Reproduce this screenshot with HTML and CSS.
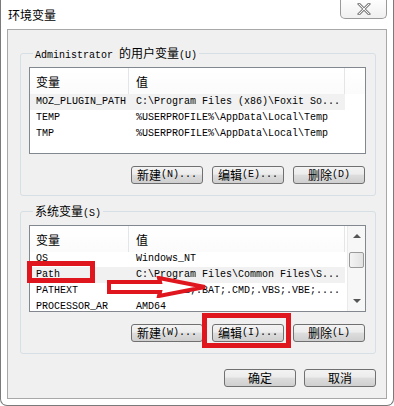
FILE: index.html
```html
<!DOCTYPE html>
<html lang="zh-CN">
<head>
  <meta charset="UTF-8" />
  <title>环境变量</title>
  <link rel="stylesheet" href="styles.css">
</head>
<body>
  <div class="window">
    <!-- barra de título -->
    <div class="titlebar">
      <span class="title">环境变量</span>
      <button class="close" aria-label="关闭">
        <svg viewBox="0 0 14 12" width="14" height="12">
          <path d="M2 1 L12 11 M12 1 L2 11" stroke="#8a8a8a" stroke-width="3" stroke-linecap="square"/>
          <path d="M2 1 L12 11 M12 1 L2 11" stroke="#f4f4f4" stroke-width="1"/>
        </svg>
      </button>
    </div>

    <div class="panel">
      <fieldset class="group">
        <legend><span class="mono">Administrator</span> <span class="cjk">的用户变量</span><span class="mono">(U)</span></legend>
        <div class="list">
          <div class="list-head">
            <span class="col-name">变量</span>
            <span class="col-value">值</span>
          </div>
          <div class="list-body">
            <div class="row sel"><span class="col-name">MOZ_PLUGIN_PATH</span><span class="col-value">C:\Program Files (x86)\Foxit So...</span></div>
            <div class="row"><span class="col-name">TEMP</span><span class="col-value">%USERPROFILE%\AppData\Local\Temp</span></div>
            <div class="row"><span class="col-name">TMP</span><span class="col-value">%USERPROFILE%\AppData\Local\Temp</span></div>
          </div>
        </div>
        <div class="btn-row">
          <button class="btn"><span class="cjk">新建</span>(N)...</button>
          <button class="btn"><span class="cjk">编辑</span>(E)...</button>
          <button class="btn"><span class="cjk">删除</span>(D)</button>
        </div>
      </fieldset>

      <fieldset class="group">
        <legend><span class="cjk">系统变量</span><span class="mono">(S)</span></legend>
        <div class="list scrolling">
          <div class="list-head">
            <span class="col-name">变量</span>
            <span class="col-value">值</span>
          </div>
          <div class="list-body">
            <div class="row"><span class="col-name">OS</span><span class="col-value">Windows_NT</span></div>
            <div class="row sel"><span class="col-name">Path</span><span class="col-value">C:\Program Files\Common Files\S...</span></div>
            <div class="row"><span class="col-name">PATHEXT</span><span class="col-value">.COM;.EXE;.BAT;.CMD;.VBS;.VBE;....</span></div>
            <div class="row"><span class="col-name">PROCESSOR_AR</span><span class="col-value">AMD64</span></div>
          </div>
          <div class="scrollbar">
            <span class="arrow up"></span>
            <span class="thumb"></span>
            <span class="arrow down"></span>
          </div>
        </div>
        <div class="btn-row">
          <button class="btn"><span class="cjk">新建</span>(W)...</button>
          <button class="btn"><span class="cjk">编辑</span>(I)...</button>
          <button class="btn"><span class="cjk">删除</span>(L)</button>
        </div>
      </fieldset>

      <div class="dialog-buttons">
        <button class="btn"><span class="cjk">确定</span></button>
        <button class="btn"><span class="cjk">取消</span></button>
      </div>
    </div>

    <!-- marcas rojas de la captura -->
    <div class="mark mark-path"></div>
    <div class="mark mark-edit"></div>
    <svg class="mark-arrow" viewBox="0 0 102 22" width="102" height="22">
      <polygon points="3,6 54,6 53,2 99,11 53,20 54,16 3,16" fill="#fff" stroke="#e0161f" stroke-width="4" stroke-linejoin="miter"/>
    </svg>
  </div>
</body>
</html>
```

FILE: styles.css
```css
* { box-sizing: border-box; }
body {
  margin: 0;
  background: #fff;
  font-family: "Liberation Mono", "Noto Sans CJK SC", monospace;
  font-size: 10px;
  color: #000;
}
button { font: inherit; color: inherit; }
.cjk { font-family: "Noto Sans CJK SC", sans-serif; font-size: 12px; }
.mono { font-family: "Liberation Mono", monospace; font-size: 10px; }

.window {
  position: relative;
  width: 394px; height: 406px;
  background: #fff;
  border: 1px solid #7a7a7a;
  border-top: none;
  border-radius: 0 0 7px 7px;
}

.titlebar {
  height: 29px;
  display: flex;
  align-items: flex-start;
  justify-content: space-between;
}
.title {
  font-family: "Noto Sans CJK SC", sans-serif;
  font-size: 12px;
  line-height: 14px;
  margin: 8px 0 0 7px;
}
.close {
  width: 47px; height: 19px;
  margin-right: 6px;
  padding: 0;
  background: linear-gradient(#fdfdfd, #f0f0f0);
  border: 1px solid #9a9a9a;
  border-top: none;
  border-radius: 0 0 5px 5px;
  display: flex; align-items: center; justify-content: center;
}
.close svg { display: block; }

.panel {
  margin: 0 6px;
  height: 370px;
  background: #f0f0f0;
  border: 1px solid #a8a8a8;
  padding: 16px 10px 0 12px;
}

.group {
  margin: 0 0 8px 0;
  padding: 7px 9px 11px 8px;
  border: 1px solid #d5dfe5;
  border-radius: 3px;
  min-width: 0;
}
.group legend {
  padding: 0 2px;
  margin-left: 4px;
  line-height: 14px;
  height: 14px;
  white-space: nowrap;
}

.list {
  position: relative;
  background: #fff;
  border: 1px solid #828790;
  height: 87px;
  overflow: hidden;
}
.list-head {
  height: 26px;
  display: flex;
  align-items: center;
  background: linear-gradient(#fff, #fbfbfb);
}
.list-head .col-name,
.list-head .col-value {
  height: 100%;
  display: flex; align-items: center;
  font-family: "Noto Sans CJK SC", sans-serif;
  font-size: 12px;
  border-right: 1px solid #e3e5e8;
}
.col-name { width: 99px; padding-left: 6px; flex: none; }
.col-value { width: 216px; padding-left: 7px; flex: none; white-space: nowrap; }
.row {
  height: 16px;
  display: flex;
  align-items: center;
  line-height: 16px;
  white-space: nowrap;
}
.row .col-value { border: none; }
.row.sel { background: #f1f1f1; width: 315px; }

.scrolling .list-body { margin-top: -1px; }
.scrollbar {
  position: absolute;
  top: 0; right: 0; bottom: 0;
  width: 18px;
  background: #f7f7f7;
  border-left: 1px solid #eaeaea;
}
.scrollbar .arrow {
  position: absolute;
  left: 5px;
  width: 0; height: 0;
  border-left: 4px solid transparent;
  border-right: 4px solid transparent;
}
.scrollbar .up { top: 8px; border-bottom: 4px solid #555; }
.scrollbar .down { bottom: 8px; border-top: 4px solid #555; }
.scrollbar .thumb {
  position: absolute;
  left: 1px; right: 1px;
  top: 26px; height: 16px;
  background: linear-gradient(90deg, #f4f4f4, #e2e2e2);
  border: 1px solid #9a9a9a;
  border-radius: 2px;
}

.btn-row {
  display: flex;
  justify-content: flex-end;
  gap: 9px;
  margin-top: 12px;
  padding-right: 1px;
}
.btn {
  width: 72px; height: 18px;
  padding: 0;
  background: linear-gradient(#f3f3f3 0%, #ececec 45%, #dddddd 50%, #cfcfcf 100%);
  border: 1px solid #707070;
  border-radius: 3px;
  display: flex; align-items: center; justify-content: center;
  line-height: 14px;
  white-space: nowrap;
}

.dialog-buttons {
  display: flex;
  justify-content: flex-end;
  gap: 8px;
  margin-top: 15px;
}

.mark {
  position: absolute;
  border: 5px solid #e0161f;
}
.mark-path { left: 26px; top: 261px; width: 68px; height: 22px; }
.mark-edit { left: 201px; top: 313px; width: 89px; height: 35px; }
.mark-arrow { position: absolute; left: 105px; top: 276px; }
```
